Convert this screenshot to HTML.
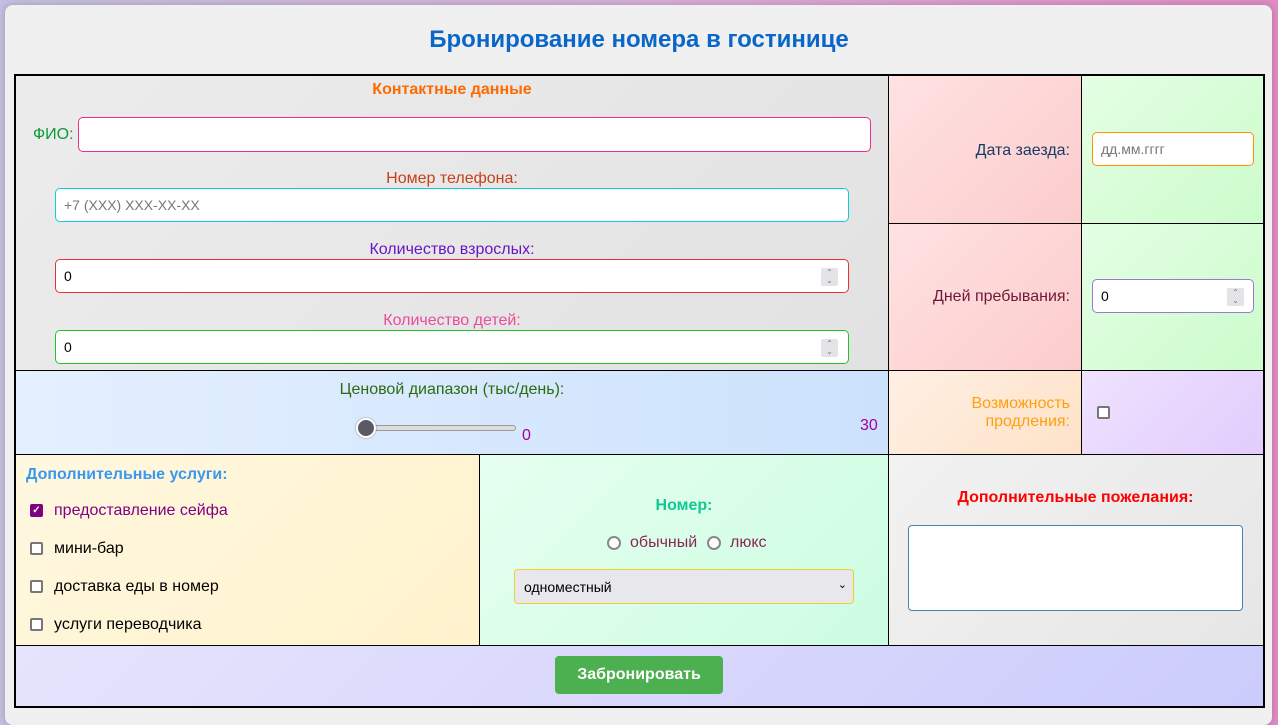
<!DOCTYPE html>
<html><head><meta charset="utf-8"><style>
*{box-sizing:border-box;margin:0;padding:0}
body{width:1278px;height:713px;overflow:hidden;font-family:"Liberation Sans",sans-serif;font-size:16px;background:linear-gradient(90deg,#c4bfe0,#d8b0d8 50%,#e08cc4);position:relative}
.wrap{position:absolute;left:5px;top:5px;width:1267px;height:720px;background:#f0f0f0;border-radius:8px;box-shadow:0 0 8px rgba(0,0,0,.2)}
.a{position:absolute}
.c{position:absolute}
.h{position:absolute;height:1px;background:#000}
.v{position:absolute;width:1px;background:#000}
h1{position:absolute;left:0;width:1278px;top:26px;text-align:center;font-size:24px;color:#0a66c8;font-weight:bold}
.in{position:absolute;background:#fff;border-radius:5px;border:1px solid;font-size:14px;padding-left:8px;display:flex;align-items:center}
.spin{position:absolute;right:10px;top:8px;width:17px;height:18px;background:#e4e4e8;border-radius:2px;font-size:8px;color:#777;text-align:center;line-height:8px;padding-top:1px}
.lbl{position:absolute;text-align:center;font-size:16px}
.cb{position:absolute;width:13px;height:13px;border:2px solid #777;border-radius:2px;background:#fff}
.rd{position:absolute;width:14px;height:14px;border:2px solid #888;border-radius:50%;background:#fff}
</style></head><body>
<div class="wrap"></div>
<h1>Бронирование номера в гостинице</h1>
<div class="a" style="left:14px;top:74px;width:1251px;height:634px;border:2px solid #000;background:#eee"></div>
<!-- cells -->
<div class="c" style="left:16px;top:76px;width:872px;height:294px;background:linear-gradient(135deg,#ececec,#e2e2e2)"></div>
<div class="c" style="left:888px;top:76px;width:193px;height:147px;background:linear-gradient(135deg,#ffe2e2,#fccccc)"></div>
<div class="c" style="left:1081px;top:76px;width:182px;height:147px;background:linear-gradient(135deg,#e4fee4,#ccfccc)"></div>
<div class="c" style="left:888px;top:223px;width:193px;height:147px;background:linear-gradient(135deg,#ffe2e2,#fccccc)"></div>
<div class="c" style="left:1081px;top:223px;width:182px;height:147px;background:linear-gradient(135deg,#e4fee4,#ccfccc)"></div>
<div class="c" style="left:16px;top:370px;width:872px;height:84px;background:linear-gradient(90deg,#e4f0ff,#cce2fc)"></div>
<div class="c" style="left:888px;top:370px;width:193px;height:84px;background:linear-gradient(135deg,#fff0e4,#fde2c8)"></div>
<div class="c" style="left:1081px;top:370px;width:182px;height:84px;background:linear-gradient(135deg,#efe2ff,#e2ccfc)"></div>
<div class="c" style="left:16px;top:454px;width:463px;height:191px;background:linear-gradient(135deg,#fff8e0,#fff2cc)"></div>
<div class="c" style="left:479px;top:454px;width:409px;height:191px;background:linear-gradient(135deg,#e6fff0,#ccfde2)"></div>
<div class="c" style="left:888px;top:454px;width:375px;height:191px;background:linear-gradient(135deg,#f2f2f2,#e6e6e6)"></div>
<div class="c" style="left:16px;top:645px;width:1247px;height:61px;background:linear-gradient(135deg,#e6e4fc,#ccccfc)"></div>
<!-- grid lines -->
<div class="v" style="left:888px;top:74px;height:571px"></div>
<div class="v" style="left:1081px;top:74px;height:380px"></div>
<div class="v" style="left:479px;top:454px;height:191px"></div>
<div class="h" style="left:888px;top:223px;width:376px"></div>
<div class="h" style="left:14px;top:370px;width:1250px"></div>
<div class="h" style="left:14px;top:454px;width:1250px"></div>
<div class="h" style="left:14px;top:645px;width:1250px"></div>
<!-- contact -->
<div class="lbl" style="left:15px;width:874px;top:81px;color:#ff6a00;font-weight:bold">Контактные данные</div>
<div class="a" style="left:33px;top:126px;color:#0a9a3a">ФИО:</div>
<div class="in" style="left:78px;top:117px;width:793px;height:35px;border-color:#e8308c"></div>
<div class="lbl" style="left:55px;width:794px;top:170px;color:#c8401a">Номер телефона:</div>
<div class="in" style="left:55px;top:188px;width:794px;height:34px;border-color:#10ccd6;color:#777">+7 (XXX) XXX-XX-XX</div>
<div class="lbl" style="left:55px;width:794px;top:241px;color:#6a14c8">Количество взрослых:</div>
<div class="in" style="left:55px;top:259px;width:794px;height:34px;border-color:#e83030;color:#000">0<div class="spin">⌃<br>⌄</div></div>
<div class="lbl" style="left:55px;width:794px;top:312px;color:#e84c9a">Количество детей:</div>
<div class="in" style="left:55px;top:330px;width:794px;height:34px;border-color:#22c422;color:#000">0<div class="spin">⌃<br>⌄</div></div>
<!-- right -->
<div class="a" style="left:890px;width:180px;text-align:right;top:142px;color:#1a3a6a">Дата заезда:</div>
<div class="in" style="left:1092px;top:132px;width:162px;height:34px;border-color:#ff9000;color:#777">дд.мм.гггг</div>
<div class="a" style="left:890px;width:180px;text-align:right;top:288px;color:#701838">Дней пребывания:</div>
<div class="in" style="left:1092px;top:279px;width:162px;height:34px;border-color:#9a78d8;color:#000">0<div class="spin" style="right:9px">⌃<br>⌄</div></div>
<div class="a" style="left:890px;width:180px;text-align:right;top:395px;color:#ff9f10;line-height:18px">Возможность<br>продления:</div>
<div class="cb" style="left:1097px;top:406px"></div>
<!-- slider -->
<div class="lbl" style="left:15px;width:874px;top:381px;color:#2e6a10">Ценовой диапазон (тыс/день):</div>
<div class="a" style="left:366px;top:425px;width:150px;height:6px;border:1px solid #999;border-radius:3px;background:#ddd"></div>
<div class="a" style="left:356px;top:418px;width:20px;height:20px;border-radius:50%;background:#5a5a66;border:2px solid #fff;box-shadow:0 0 2px #888"></div>
<div class="a" style="left:522px;top:427px;color:#a000a0">0</div>
<div class="a" style="left:860px;top:417px;color:#a000a0">30</div>
<!-- services -->
<div class="a" style="left:26px;top:466px;color:#3a98f0;font-weight:bold">Дополнительные услуги:</div>
<div class="cb" style="left:30px;top:504px;background:#800080;border-color:#800080;color:#fff;font-size:10px;line-height:9px;text-align:center;font-weight:bold">✓</div>
<div class="a" style="left:54px;top:502px;color:#800080">предоставление сейфа</div>
<div class="cb" style="left:30px;top:542px"></div><div class="a" style="left:54px;top:540px">мини-бар</div>
<div class="cb" style="left:30px;top:580px"></div><div class="a" style="left:54px;top:578px">доставка еды в номер</div>
<div class="cb" style="left:30px;top:618px"></div><div class="a" style="left:54px;top:616px">услуги переводчика</div>
<!-- room -->
<div class="lbl" style="left:479px;width:410px;top:497px;color:#10c890;font-weight:bold">Номер:</div>
<div class="rd" style="left:607px;top:536px"></div><div class="a" style="left:630px;top:534px;color:#8a2858">обычный</div>
<div class="rd" style="left:707px;top:536px"></div><div class="a" style="left:730px;top:534px;color:#8a2858">люкс</div>
<div class="a" style="left:514px;top:569px;width:340px;height:35px;border:1px solid #f0d030;border-radius:4px;background:#e8e8ec;font-size:14px;padding:9px 0 0 9px">одноместный<span style="position:absolute;right:6px;top:8px;font-size:11px">⌄</span></div>
<!-- wishes -->
<div class="lbl" style="left:888px;width:375px;top:489px;color:#ff0000;font-weight:bold">Дополнительные пожелания:</div>
<div class="a" style="left:908px;top:525px;width:335px;height:86px;border:1px solid #4682b4;border-radius:4px;background:#fff"></div>
<!-- button -->
<div class="a" style="left:555px;top:656px;width:168px;height:38px;background:#4caf50;border-radius:4px;color:#fff;font-weight:bold;text-align:center;line-height:38px">Забронировать</div>
</body></html>
